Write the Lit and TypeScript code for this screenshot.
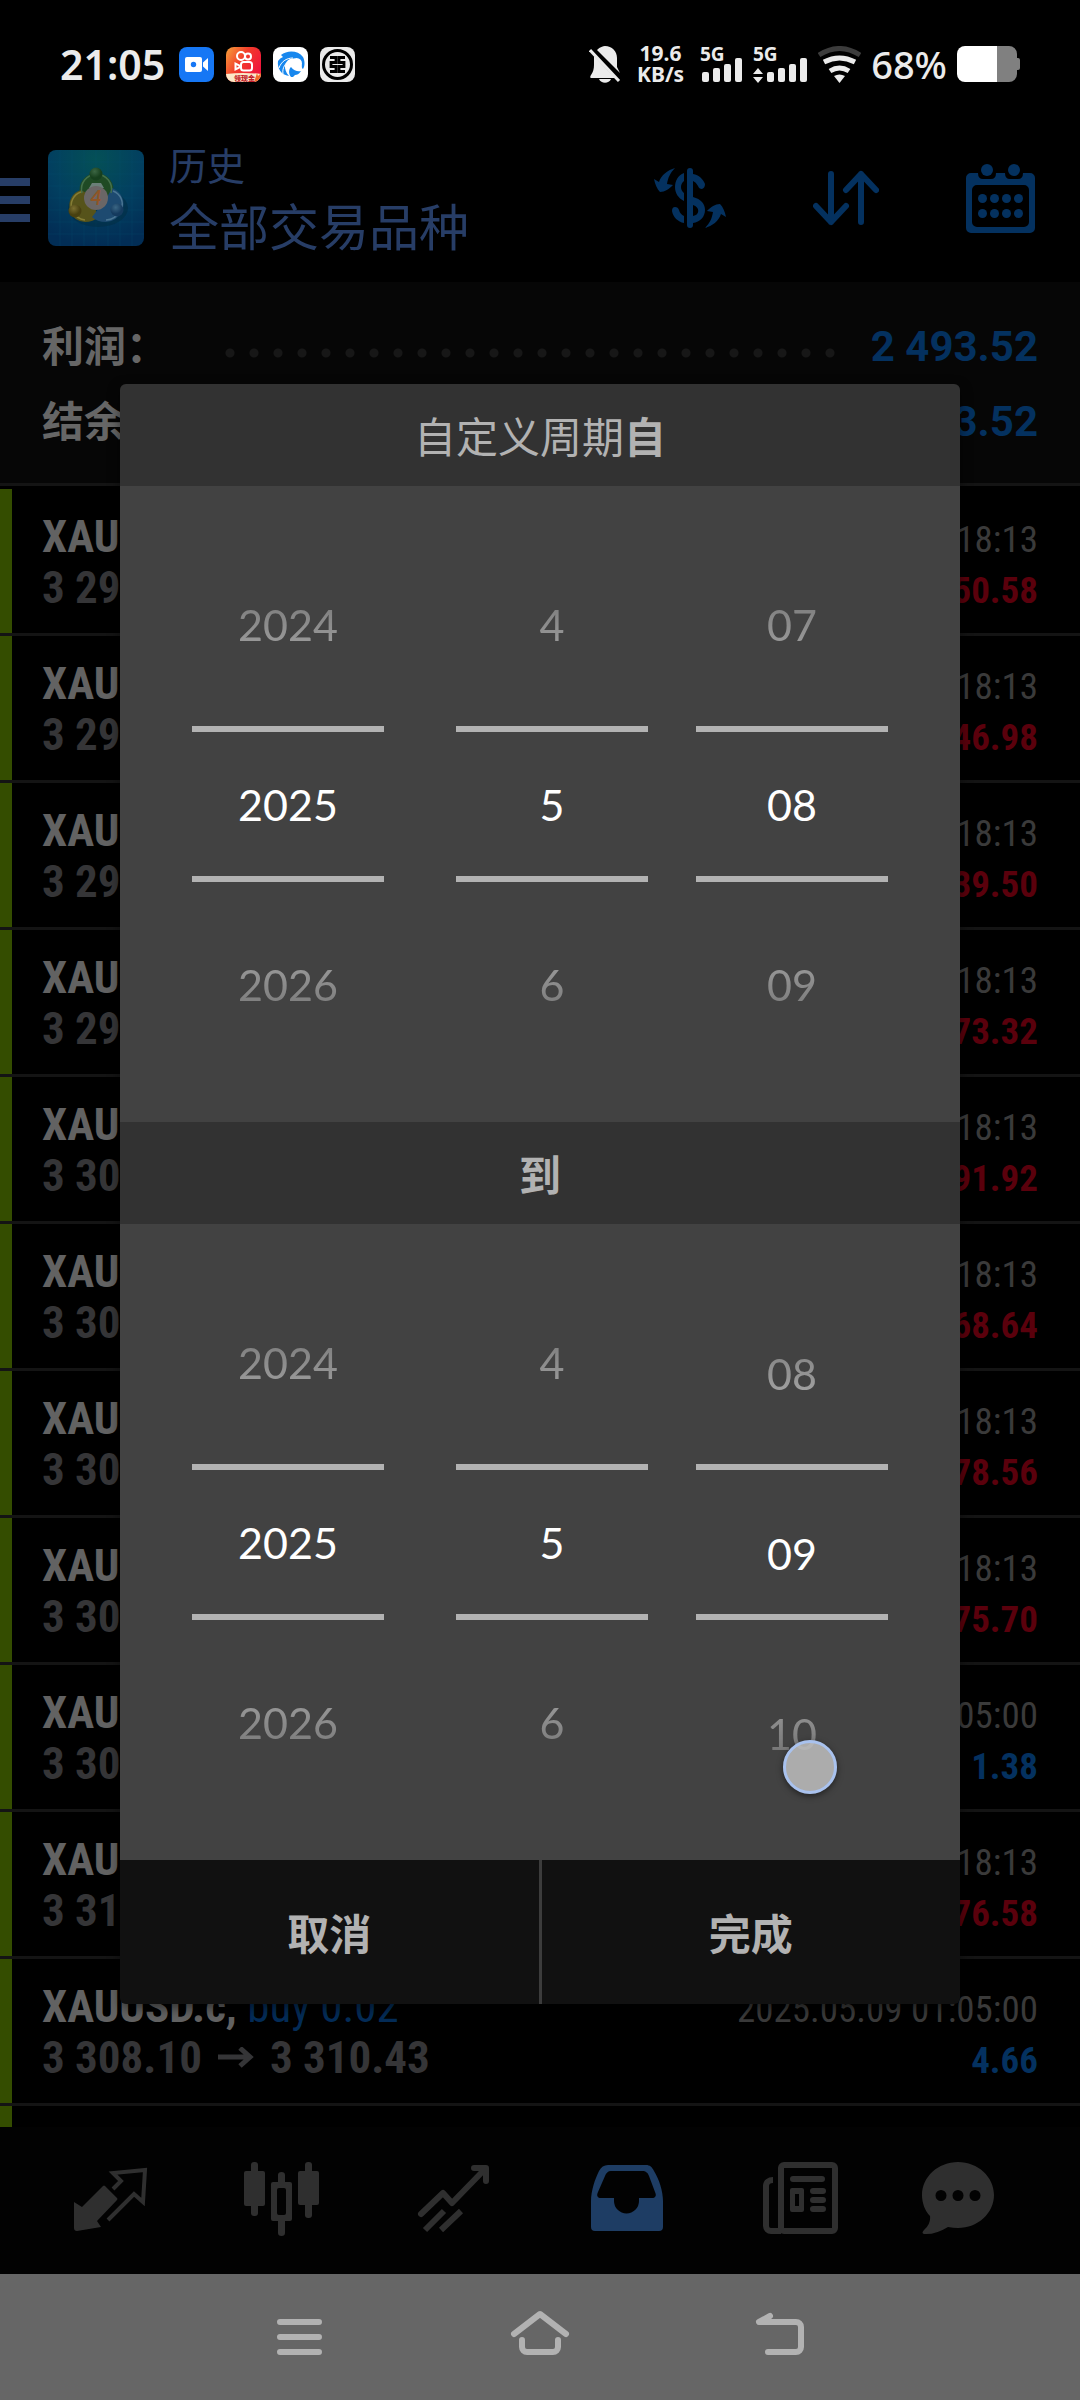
import { LitElement, html, svg, css, nothing } from "lit";
import { customElement, property } from "lit/decorators.js";
import { classMap } from "lit/directives/class-map.js";
import { styleMap } from "lit/directives/style-map.js";

interface Deal {
  open: string;
  close: string;
  time: string;
  profit: string;
  gain?: boolean;
}

interface Wheel {
  label: string;
  values: [string, string, string];
  shift: number;
}

const deals: Deal[] = [
  { open: "3 298.10", close: "3 300.63", time: "2025.05.08 23:18:13", profit: "-50.58" },
  { open: "3 297.10", close: "3 299.45", time: "2025.05.08 23:18:13", profit: "-46.98" },
  { open: "3 296.10", close: "3 298.08", time: "2025.05.08 23:18:13", profit: "-39.50" },
  { open: "3 299.10", close: "3 302.77", time: "2025.05.08 23:18:13", profit: "-73.32" },
  { open: "3 301.10", close: "3 305.70", time: "2025.05.08 23:18:13", profit: "-91.92" },
  { open: "3 302.10", close: "3 305.53", time: "2025.05.08 23:18:13", profit: "-68.64" },
  { open: "3 303.10", close: "3 307.03", time: "2025.05.08 23:18:13", profit: "-78.56" },
  { open: "3 304.10", close: "3 307.89", time: "2025.05.08 23:18:13", profit: "-75.70" },
  { open: "3 309.74", close: "3 310.43", time: "2025.05.09 01:05:00", profit: "1.38", gain: true },
  { open: "3 314.10", close: "3 317.93", time: "2025.05.08 23:18:13", profit: "-76.58" },
  { open: "3 308.10", close: "3 310.43", time: "2025.05.09 01:05:00", profit: "4.66", gain: true },
];

const fromDate: Wheel[] = [
  { label: "年", values: ["2024", "2025", "2026"], shift: 0 },
  { label: "月", values: ["4", "5", "6"], shift: 0 },
  { label: "日", values: ["07", "08", "09"], shift: 0 },
];

const toDate: Wheel[] = [
  { label: "年", values: ["2024", "2025", "2026"], shift: 0 },
  { label: "月", values: ["4", "5", "6"], shift: 0 },
  { label: "日", values: ["08", "09", "10"], shift: 11 },
];

@customElement("status-bar")
export class StatusBar extends LitElement {
  static styles = css`
    :host {
      display: flex;
      align-items: center;
      box-sizing: border-box;
      height: 114px;
      padding: 14px 60px 0;
      color: #ebebeb;
      font-family: "Noto Sans", sans-serif;
      font-weight: 600;
      white-space: nowrap;
    }
    svg {
      display: block;
      flex: none;
    }
    .time {
      font-size: 41px;
      line-height: 50px;
    }
    .apps {
      display: flex;
      gap: 12px;
      margin-left: 14px;
    }
    .right {
      display: flex;
      align-items: center;
      gap: 10px;
      margin-left: auto;
    }
    .speed {
      margin: 0 6px;
      font-size: 21px;
      line-height: 21px;
      font-weight: 700;
      text-align: center;
    }
    .battery-level {
      font-size: 38px;
      line-height: 50px;
      font-weight: 500;
    }
    .small {
      font-family: "Noto Sans", sans-serif;
      font-size: 19px;
      font-weight: 700;
    }
    .badge {
      font-family: "Noto Sans CJK SC", sans-serif;
      font-size: 7px;
      font-weight: 900;
    }
  `;

  render() {
    return html`
      <span class="time">21:05</span>
      <div class="apps">
        <svg width="35" height="35" viewBox="0 0 35 35" aria-hidden="true">
          <rect width="35" height="35" rx="8" fill="#1677f5" />
          <rect x="6" y="10" width="17" height="15" rx="2" fill="#fff" />
          <path d="M24 15.500L29 11v13l-5-4.500z" fill="#fff" />
          <circle cx="14.500" cy="17.500" r="2.700" fill="#1677f5" />
        </svg>
        <svg width="35" height="35" viewBox="0 0 35 35" aria-hidden="true">
          <defs>
            <linearGradient id="warm" x1="0" y1="0" x2="1" y2="0.600">
              <stop offset="0" stop-color="#f6a33a" />
              <stop offset="0.500" stop-color="#f23b2b" />
              <stop offset="1" stop-color="#f0143c" />
            </linearGradient>
            <clipPath id="tile"><rect width="35" height="35" rx="8" /></clipPath>
          </defs>
          <g clip-path="url(#tile)">
            <rect width="35" height="35" fill="url(#warm)" />
            <path d="M0 27Q17 25 35 27V35H0z" fill="#fbe9c8" />
            <path d="M28 35l3-9 1 3 3-3v9z" fill="#f26a2a" />
          </g>
          <g fill="none" stroke="#fff" stroke-width="2">
            <circle cx="15" cy="9" r="4" />
            <circle cx="22" cy="9.500" r="3" />
            <rect x="15" y="15" width="11" height="8.500" rx="2.500" />
            <path d="M9.500 16.500v6l4-2v-2z" />
          </g>
          <text class="badge" x="8" y="33.500" fill="#c21d2b">领现金</text>
        </svg>
        <svg width="35" height="35" viewBox="0 0 35 35" aria-hidden="true">
          <rect width="35" height="35" rx="8" fill="#fff" />
          <path d="M8 8C14 3 25 3 30 10c2 4 2 9 0 12-1-1-1-1-1-1 0-7-6-11-12-9-6 3-7 10-1 17C8 28 4 21 5 14q2-3 5-4z" fill="#1787ee" />
          <path d="M18 30c-3-4-2-8 0-10 3 4 7 5 10 4-2 3-4 4-6 4l-2 2z" fill="#1787ee" />
          <path d="M6 21C8 15 13 11 20 11M10 27c-1-6 2-11 8-14" fill="none" stroke="#fff" stroke-width="1" />
          <circle cx="23.500" cy="16.500" r="5.500" fill="#fff" />
        </svg>
        <svg width="35" height="35" viewBox="0 0 35 35" aria-hidden="true">
          <rect width="35" height="35" rx="8" fill="#ebebeb" />
          <circle cx="17.500" cy="17.500" r="14" fill="none" stroke="#000" stroke-width="3" />
          <path d="M10 10.500h6v5h-5v4h5v5h-6M25 10.500h-6v5h5v4h-5v5h6" fill="none" stroke="#000" stroke-width="2.800" />
        </svg>
      </div>
      <div class="right">
        <svg width="32" height="37" viewBox="0 0 32 37" aria-hidden="true" fill="#ebebeb">
          <path d="M8 4C11 1 14 0 16 0c7 0 12 5 12 12v9l3 6zM5 10l21 22H2c-1 0-1-2 0-3 2-3 3-6 3-10z" />
          <path d="M10 33h12c-2 5-10 5-12 0z" />
          <path d="M1 4l29 31" stroke="#ebebeb" stroke-width="3" />
        </svg>
        <div class="speed"><div>19.6</div><div>KB/s</div></div>
        <svg width="43" height="37" viewBox="0 0 43 37" fill="#ebebeb" role="img" aria-label="5G">
          <text class="small" x="0" y="15">5G</text>
          <rect x="2" y="26" width="7" height="10" rx="2" />
          <rect x="13" y="22" width="7" height="14" rx="2" />
          <rect x="24" y="18" width="7" height="18" rx="2" />
          <rect x="35" y="12" width="7" height="24" rx="2" />
        </svg>
        <svg width="55" height="37" viewBox="0 0 55 37" fill="#ebebeb" role="img" aria-label="5G">
          <text class="small" x="0" y="15">5G</text>
          <path d="M0 28l5-6 5 6zM0 31h10l-5 6z" />
          <rect x="14" y="26" width="7" height="10" rx="2" />
          <rect x="25" y="22" width="7" height="14" rx="2" />
          <rect x="36" y="18" width="7" height="18" rx="2" />
          <rect x="47" y="12" width="7" height="24" rx="2" />
        </svg>
        <svg width="43" height="37" viewBox="0 0 43 37" aria-hidden="true" fill="none" stroke-width="5">
          <path d="M1 9Q21.500-4 42 9" stroke="#3c3c3c" />
          <path d="M6 16Q21.500 8 37 16M12 25q9.500-6 19 0" stroke="#ebebeb" />
          <path d="M16 30q5.500-3 11 0l-5.500 7z" fill="#ebebeb" />
        </svg>
        <span class="battery-level">68%</span>
        <svg width="63" height="36" viewBox="0 0 63 36" aria-hidden="true">
          <path d="M8 0H40V36H8a8 8 0 0 1-8-8V8a8 8 0 0 1 8-8z" fill="#fff" />
          <path d="M40 0H52a8 8 0 0 1 8 8v4h1a2 2 0 0 1 2 2v8a2 2 0 0 1-2 2h-1v4a8 8 0 0 1-8 8H40z" fill="#808080" />
        </svg>
      </div>
    `;
  }
}

@customElement("date-wheels")
export class DateWheels extends LitElement {
  @property({ attribute: false }) wheels: Wheel[] = [];

  static styles = css`
    :host {
      display: grid;
      grid-template-columns: 1fr 1fr 1fr;
      padding: 0 72px;
      background: #424242;
    }
    .wheel {
      display: grid;
      grid-template-rows: 240px 156px 240px;
      min-width: 0;
    }
    .wheel:nth-child(1) {
      margin-right: 40px;
    }
    .wheel:nth-child(2) {
      margin: 0 8px 0 32px;
    }
    .wheel:nth-child(3) {
      margin-left: 40px;
    }
    .cell {
      display: flex;
      align-items: center;
      justify-content: center;
      box-sizing: border-box;
      margin: 0;
      padding: 2px 0 0;
      border: 0;
      background: none;
      color: #ffffff;
      font: 400 43px/54px Lato, sans-serif;
    }
    .previous {
      padding-top: 38px;
      mask-image: linear-gradient(to bottom, transparent 30px, rgba(0, 0, 0, 0.76) 240px);
    }
    .current {
      border-top: 6px solid #b2b2b2;
      border-bottom: 6px solid #b2b2b2;
    }
    .next {
      padding-bottom: 36px;
      mask-image: linear-gradient(to top, transparent 30px, rgba(0, 0, 0, 0.76) 240px);
    }
  `;

  render() {
    return this.wheels.map((w) => {
      const scroll = styleMap({ transform: w.shift ? `translateY(${w.shift}px)` : null });
      return html`
        <div class="wheel" role="group" aria-label=${w.label}>
          <button class="cell previous"><span style=${scroll}>${w.values[0]}</span></button>
          <button class="cell current" aria-current="true"><span style=${scroll}>${w.values[1]}</span></button>
          <button class="cell next"><span style=${scroll}>${w.values[2]}</span></button>
        </div>
      `;
    });
  }
}

@customElement("period-dialog")
export class PeriodDialog extends LitElement {
  static styles = css`
    :host {
      display: block;
      position: relative;
      width: 100%;
      border-radius: 6px;
      background: #111111;
      box-shadow: 0 4px 12px rgba(0, 0, 0, 0.5);
      color: #b2b2b2;
      font-family: "Noto Sans CJK SC", sans-serif;
    }
    .title {
      margin: 0;
      padding: 21px 0;
      background: #323232;
      font-size: 42px;
      line-height: 60px;
      font-weight: 400;
      text-align: center;
    }
    .top {
      border-radius: 6px 6px 0 0;
    }
    .strong {
      font-weight: 700;
    }
    .actions {
      display: flex;
    }
    .action {
      flex: 1;
      padding: 42px 0;
      border: 0;
      background: none;
      color: inherit;
      font: 700 42px/60px "Noto Sans CJK SC", sans-serif;
    }
    .action + .action {
      border-left: 3px solid #3c3c3c;
    }
    .touch {
      position: absolute;
      left: 663px;
      top: 1356px;
      box-sizing: border-box;
      width: 54px;
      height: 54px;
      border: 3px solid #a9c2ee;
      border-radius: 50%;
      background: rgba(190, 190, 190, 0.85);
      box-shadow: 0 2px 6px rgba(0, 0, 0, 0.5);
    }
  `;

  render() {
    return html`
      <h2 class="title top">自定义周期<b class="strong">自</b></h2>
      <date-wheels .wheels=${fromDate}></date-wheels>
      <h2 class="title strong">到</h2>
      <date-wheels .wheels=${toDate}></date-wheels>
      <div class="actions">
        <button class="action">取消</button>
        <button class="action">完成</button>
      </div>
      <div class="touch"></div>
    `;
  }
}

const arrowHalf = svg`<path d="M21 2C14 4 7 9 5 16L0 13C1 18 3 23 6 26C11 26 15 23 19 19L13 18C14 12 16 7 21 2Z" />`;

const tabs = [
  {
    name: "行情",
    icon: svg`
      <path class="solid" d="M12 51l8 5 21-21q1-1 2 0l12 12q1 1 0 2L35 70l4 6-24 4q-3 0-3-3z" />
      <path class="line thin" d="M51 38l8-8-8-8 32-3-2 32-9-8-26 26" />`,
  },
  {
    name: "图表",
    icon: svg`
      <rect class="solid" x="10" y="20" width="21" height="35" rx="2" />
      <rect class="solid" x="17" y="11" width="7" height="54" rx="3" />
      <rect class="solid" x="64" y="20" width="21" height="34" rx="2" />
      <rect class="solid" x="71" y="11" width="7" height="56" rx="3" />
      <path class="solid" fill-rule="evenodd" d="M44 31V24q0-3 3.500-3t3.500 3v7h5q2 0 2 2V68q0 2-2 2H51V82q0 3-3.500 3T44 82V70H39q-2 0-2-2V33q0-2 2-2zM45 37q-2 0-2 2V62q0 2 2 2h5q2 0 2-2V39q0-2-2-2z" />`,
  },
  {
    name: "交易",
    icon: svg`
      <path class="line" d="M15 63L37 42l9 10L79 18M68 17H80V30" />
      <path class="line butt" d="M19 79L38 60M35 79L55 60" />`,
  },
  {
    name: "历史",
    active: true,
    icon: svg`
      <path class="solid" fill-rule="evenodd" d="M30 14H68C72 14 74 16 76 20C81 28 85 40 85 50V76a4 4 0 0 1-4 4H17a4 4 0 0 1-4-4V50C13 40 17 28 21 20C23 16 26 14 30 14ZM33 20H64c4 0 6 2 7 5L77 41c2 4 0 6-3 6H61v3a12.500 12.500 0 0 1-25 0V47H23c-3 0-5-2-3-6L27 25c1-3 3-5 6-5Z" />`,
  },
  {
    name: "新闻",
    icon: svg`
      <rect class="line" x="31" y="14" width="54" height="66" rx="3" />
      <path class="line butt" d="M23 29c-4 0-7 2-7 6V75a5 5 0 0 0 5 5H31" />
      <path class="line" d="M43 28H72M63 40H73M63 49H73M63 58H73" />
      <path class="solid" fill-rule="evenodd" d="M42 37H52q2 0 2 2V59q0 2-2 2H42q-2 0-2-2V39q0-2 2-2ZM45 43V55H49V43Z" />`,
  },
  {
    name: "消息",
    icon: svg`
      <path class="solid" fill-rule="evenodd" d="M36 11C56 11 72 26 72 44C72 62 56 77 36 77Q31 77 26 76Q13 84 2 83Q-1 82 2 79Q9 73 8 65C3 60 0 52 0 44C0 26 16 11 36 11ZM13.500 44.500a5.500 5.500 0 1 0 11 0a5.500 5.500 0 1 0-11 0M30.500 44.500a5.500 5.500 0 1 0 11 0a5.500 5.500 0 1 0-11 0M47.500 44.500a5.500 5.500 0 1 0 11 0a5.500 5.500 0 1 0-11 0" />`,
  },
];

@customElement("app-root")
export class AppRoot extends LitElement {
  static styles = css`
    :host {
      display: flex;
      flex-direction: column;
      position: relative;
      height: 100vh;
      overflow: hidden;
      background: #000000;
      font-family: Roboto, "Noto Sans CJK SC", sans-serif;
    }
    svg {
      display: block;
      flex: none;
    }
    .header {
      display: flex;
      align-items: center;
      height: 168px;
      padding-right: 45px;
      color: #273d66;
      font-family: "Noto Sans CJK SC", sans-serif;
    }
    .icon-button {
      padding: 0;
      border: 0;
      background: none;
      color: #04315f;
    }
    .menu {
      padding-top: 4px;
      margin-right: 18px;
    }
    .titles {
      margin: 0 auto 0 25px;
    }
    .section {
      margin: 0;
      font-size: 38px;
      line-height: 52px;
      font-weight: 400;
    }
    .scope {
      margin: 0;
      font-size: 50px;
      line-height: 68px;
      font-weight: 400;
    }
    .tools {
      display: flex;
      align-items: center;
      gap: 87px;
    }
    .logo-digit {
      font: italic 700 20px Lato, sans-serif;
    }
    .summary {
      margin: 0;
      padding: 27px 42px 24px;
      border-bottom: 3px solid #141414;
      background: #060606;
      font-weight: 700;
      font-size: 42px;
      line-height: 75px;
    }
    .summary-row {
      display: grid;
      grid-template-columns: 176px 1fr auto;
      height: 75px;
    }
    .summary-label {
      color: #666666;
      font-family: "Noto Sans CJK SC", sans-serif;
      line-height: 70px;
    }
    .dots {
      margin-right: 26px;
      background: radial-gradient(circle at 12px 44px, #171717 4px, transparent 5px) 0 0 / 24px 75px repeat-x;
    }
    .summary-value {
      margin: 0;
      color: #04315f;
    }
    .deals {
      flex: 1 1 0;
      min-height: 0;
      margin: 0;
      padding: 3px 0 0;
      overflow: hidden;
      list-style: none;
      font-family: "Roboto Condensed", "Liberation Sans Narrow", sans-serif;
    }
    .deal {
      display: grid;
      grid-template-columns: auto auto;
      grid-template-rows: 51px 51px;
      justify-content: space-between;
      align-items: baseline;
      align-content: start;
      box-sizing: border-box;
      height: 147px;
      padding: 22px 42px 0;
      border-bottom: 3px solid #141414;
      background: linear-gradient(to right, #344d00 12px, transparent 12px) padding-box;
      line-height: 51px;
      white-space: nowrap;
    }
    .symbol {
      color: #626262;
      font-size: 45px;
      font-weight: 700;
    }
    .side {
      color: #042c57;
      font-weight: 400;
    }
    .time {
      color: #3a3a3a;
      font-size: 37px;
      text-align: right;
    }
    .prices {
      display: flex;
      align-items: baseline;
      gap: 16px;
      color: #353537;
      font-size: 45px;
      font-weight: 700;
    }
    .profit {
      color: #5a000c;
      font-size: 37px;
      font-weight: 700;
      text-align: right;
    }
    .profit.gain {
      color: #04315f;
    }
    .tabs {
      display: grid;
      grid-template-columns: repeat(6, 1fr);
      padding: 24px 24px 27px;
      background: #020202;
    }
    .tab {
      display: flex;
      justify-content: center;
      color: #2f2f2f;
    }
    .tab.active {
      color: #1e3d64;
    }
    .solid {
      fill: currentColor;
    }
    .line {
      fill: none;
      stroke: currentColor;
      stroke-width: 6px;
      stroke-linecap: round;
      stroke-linejoin: round;
    }
    .thin {
      stroke-width: 4px;
      stroke-linecap: butt;
      stroke-linejoin: miter;
    }
    .butt {
      stroke-linecap: butt;
    }
    .navigation {
      display: grid;
      grid-template-columns: repeat(3, 240px);
      justify-content: center;
      background: #666666;
    }
    .nav-button {
      display: flex;
      justify-content: center;
      padding: 33px 0;
      border: 0;
      background: none;
      color: #b2b2b2;
    }
    .overlay {
      position: absolute;
      inset: 0;
      display: flex;
      align-items: center;
      padding: 114px 120px 126px;
    }
  `;

  private logo() {
    return html`
      <svg width="96" height="96" viewBox="0 0 96 96" role="img" aria-label="MetaTrader 4">
        <defs>
          <radialGradient id="sky" cx="0.500" cy="0.100" r="0.900">
            <stop offset="0" stop-color="#045056" />
            <stop offset="0.550" stop-color="#023f60" />
            <stop offset="1" stop-color="#022d55" />
          </radialGradient>
          <radialGradient id="green" cx="0.400" cy="0.300"><stop offset="0" stop-color="#3c6643" /><stop offset="1" stop-color="#173f1d" /></radialGradient>
          <radialGradient id="gold" cx="0.400" cy="0.300"><stop offset="0" stop-color="#7a6f30" /><stop offset="1" stop-color="#484010" /></radialGradient>
          <radialGradient id="blue" cx="0.400" cy="0.300"><stop offset="0" stop-color="#3a6684" /><stop offset="1" stop-color="#143a5e" /></radialGradient>
        </defs>
        <rect width="96" height="96" rx="8" fill="url(#sky)" />
        <path d="M12 0V96M24 0V96M36 0V96M48 0V96M60 0V96M72 0V96M84 0V96M0 12H96M0 24H96M0 36H96M0 48H96M0 60H96M0 72H96M0 84H96" stroke="#0b5272" stroke-opacity="0.250" />
        <ellipse cx="50" cy="58" rx="30" ry="19" fill="#012c40" fill-opacity="0.500" />
        <path d="M32 44a17 17 0 1 1 33 0l-7 3H38z" fill="#1f4a24" />
        <path d="M33 40a16 16 0 0 0-11 20q3 11 15 12 8 0 14-5L40 44z" fill="#56531a" />
        <path d="M64 38a17 17 0 0 1 10 23q-6 11-16 11-9 0-14-5l14-18z" fill="#1d4a70" />
        <g fill="none" stroke-width="1.500">
          <path d="M34 43a15 15 0 1 1 29 0" stroke="#44704a" />
          <path d="M33 42a14 14 0 0 0-9 18q4 9 13 10" stroke="#857d35" />
          <path d="M65 41a14 14 0 0 1 8 19q-6 10-15 10" stroke="#4a7693" />
        </g>
        <path d="M44 33h9l3 5H41z" fill="#6a7f78" />
        <circle cx="48" cy="24" r="6.500" fill="url(#green)" />
        <circle cx="27" cy="61" r="6.500" fill="url(#gold)" />
        <circle cx="69" cy="60" r="6.500" fill="url(#blue)" />
        <circle cx="48" cy="48" r="12" fill="#6a6666" />
        <text class="logo-digit" x="48" y="55" text-anchor="middle" fill="#8f5526">4</text>
      </svg>
    `;
  }

  render() {
    return html`
      <status-bar></status-bar>
      <header class="header">
        <button class="icon-button menu" aria-label="菜单">
          <svg width="30" height="44" viewBox="0 0 30 44" fill="#273d66">
            <path d="M0 0H30V8H0zM0 18H30V26H0zM0 36H30V44H0z" />
          </svg>
        </button>
        ${this.logo()}
        <div class="titles">
          <p class="section">历史</p>
          <h1 class="scope">全部交易品种</h1>
        </div>
        <div class="tools">
          <button class="icon-button" aria-label="货币">
            <svg width="72" height="64" viewBox="0 0 72 64" fill="currentColor">
              ${arrowHalf}
              <g transform="rotate(180 36 32)">${arrowHalf}</g>
              <rect x="33" y="2" width="6" height="60" rx="3" />
              <path d="M30 7C24 9 21 15 21 21C21 27 24 32 30 35V27C26 24 26 18 30 15Z" />
              <path d="M39 8C45 9 49 13 51 18Q51 22 48 23Q45 23 44 20Q42 16 39 15Z" />
              <path fill-rule="evenodd" d="M39 31C47 33 51 38 51 44C51 51 46 56 39 57ZM39 39V50C46 49 46 41 39 39Z" />
              <path d="M30 57C24 56 19 51 18 45Q18 41 21 41Q24 41 25 44Q26 48 30 50Z" />
            </svg>
          </button>
          <button class="icon-button" aria-label="排序">
            <svg width="66" height="56" viewBox="0 0 66 56" fill="none" stroke="currentColor" stroke-width="6" stroke-linecap="round" stroke-linejoin="round">
              <path d="M18 4V52M3 36L18 52L33 36M48 52V4M33 20L48 4L63 20" />
            </svg>
          </button>
          <button class="icon-button" aria-label="日期">
            <svg width="69" height="69" viewBox="0 0 69 69" fill="currentColor">
              <path fill-rule="evenodd" d="M5 9H12Q12 15 17 15H25Q30 15 30 9H39Q39 15 44 15H52Q57 15 57 9H64a5 5 0 0 1 5 5V64a5 5 0 0 1-5 5H5a5 5 0 0 1-5-5V14a5 5 0 0 1 5-5ZM11 21a5 5 0 0 0-5 5V58a5 5 0 0 0 5 5H58a5 5 0 0 0 5-5V26a5 5 0 0 0-5-5Z" />
              <circle cx="21" cy="6" r="6" />
              <circle cx="48" cy="6" r="6" />
              ${[16.5, 28.5, 40.5, 52.5].map((x) => svg`
                <circle cx=${x} cy="34.500" r="4.500" />
                <circle cx=${x} cy="49.500" r="4.500" />`)}
            </svg>
          </button>
        </div>
      </header>
      <dl class="summary">
        ${["利润：", "结余："].map((label) => html`
          <div class="summary-row">
            <dt class="summary-label">${label}</dt>
            <div class="dots" role="presentation"></div>
            <dd class="summary-value">2 493.52</dd>
          </div>
        `)}
      </dl>
      <ul class="deals">
        ${deals.map((d) => html`
          <li class="deal">
            <span class="symbol">XAUUSD.c, <span class="side">buy 0.02</span></span>
            <span class="time">${d.time}</span>
            <span class="prices">
              <span>${d.open}</span>
              <svg width="36" height="26" viewBox="0 0 36 26" fill="none" stroke="currentColor" stroke-width="5">
                <path d="M0 10H32M22 1L32 10L22 19" />
              </svg>
              <span>${d.close}</span>
            </span>
            <span class=${classMap({ profit: true, gain: !!d.gain })}>${d.profit}</span>
          </li>
        `)}
        <li class="deal" aria-hidden="true">${nothing}</li>
      </ul>
      <nav class="tabs">
        ${tabs.map((t) => html`
          <a class=${classMap({ tab: true, active: !!t.active })} href="#" aria-label=${t.name}>
            <svg width="96" height="96" viewBox="0 0 96 96">${t.icon}</svg>
          </a>
        `)}
      </nav>
      <div class="navigation">
        <button class="nav-button" aria-label="最近任务">
          <svg class="line" width="60" height="60" viewBox="0 0 60 60"><path d="M10 15H49M10 30H49M10 45H49" /></svg>
        </button>
        <button class="nav-button" aria-label="主屏幕">
          <svg class="line" width="60" height="60" viewBox="0 0 60 60"><path d="M4 27L30 7L56 27M12 33V40a5 5 0 0 0 5 5H43a5 5 0 0 0 5-5V33" /></svg>
        </button>
        <button class="nav-button" aria-label="返回">
          <svg class="line" width="60" height="60" viewBox="0 0 60 60"><path d="M20 9L9 15H46a5 5 0 0 1 5 5V40a5 5 0 0 1-5 5H18" /></svg>
        </button>
      </div>
      <div class="overlay">
        <period-dialog role="dialog" aria-modal="true" aria-label="自定义周期"></period-dialog>
      </div>
    `;
  }
}
